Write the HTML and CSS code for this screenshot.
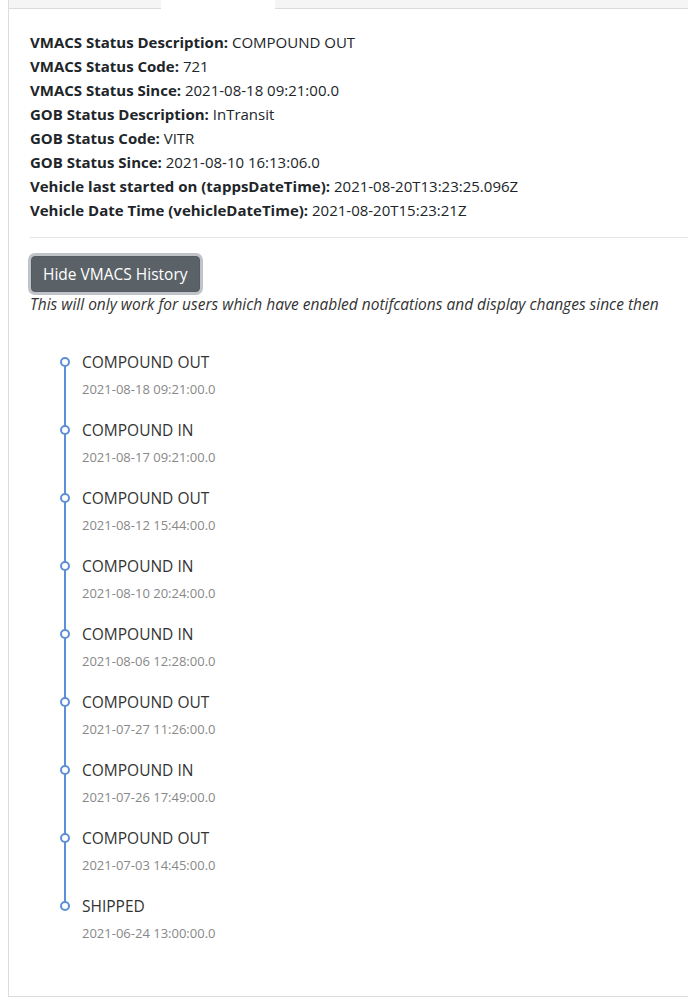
FILE: index.html
```html
<!DOCTYPE html>
<html lang="en">

<head>
    <meta charset="UTF-8" />
    <title>Vehicle Status</title>
    <link rel="stylesheet" href="styles.css">
</head>

<body>
    <div class="panel">
        <div class="tabs">
            <span class="tab first"></span>
            <span class="tab active"></span>
            <span class="tab rest"></span>
        </div>

        <div class="content">
            <div class="details">
                <div><strong>VMACS Status Description:</strong> COMPOUND OUT</div>
                <div><strong>VMACS Status Code:</strong> 721</div>
                <div><strong>VMACS Status Since:</strong> 2021-08-18 09:21:00.0</div>
                <div><strong>GOB Status Description:</strong> InTransit</div>
                <div><strong>GOB Status Code:</strong> VITR</div>
                <div><strong>GOB Status Since:</strong> 2021-08-10 16:13:06.0</div>
                <div><strong>Vehicle last started on (tappsDateTime):</strong> 2021-08-20T13:23:25.096Z</div>
                <div><strong>Vehicle Date Time (vehicleDateTime):</strong> 2021-08-20T15:23:21Z</div>
            </div>

            <hr>

            <button type="button" class="btn-history">Hide VMACS History</button>
            <p class="note">This will only work for users which have enabled notifcations and display changes since then</p>

            <ul class="timeline">
                <li><div class="status">COMPOUND OUT</div><div class="date">2021-08-18 09:21:00.0</div></li>
                <li><div class="status">COMPOUND IN</div><div class="date">2021-08-17 09:21:00.0</div></li>
                <li><div class="status">COMPOUND OUT</div><div class="date">2021-08-12 15:44:00.0</div></li>
                <li><div class="status">COMPOUND IN</div><div class="date">2021-08-10 20:24:00.0</div></li>
                <li><div class="status">COMPOUND IN</div><div class="date">2021-08-06 12:28:00.0</div></li>
                <li><div class="status">COMPOUND OUT</div><div class="date">2021-07-27 11:26:00.0</div></li>
                <li><div class="status">COMPOUND IN</div><div class="date">2021-07-26 17:49:00.0</div></li>
                <li><div class="status">COMPOUND OUT</div><div class="date">2021-07-03 14:45:00.0</div></li>
                <li><div class="status">SHIPPED</div><div class="date">2021-06-24 13:00:00.0</div></li>
            </ul>
        </div>
    </div>
</body>

</html>
```

FILE: styles.css
```css
body {
    margin: 0;
    font-family: "Open Sans", Arial, sans-serif;
    font-size: 15px;
    color: #212529;
    background: #fff;
}

.panel {
    margin-left: 8px;
    border-left: 1px solid #dcdcdc;
    border-bottom: 1px solid #dcdcdc;
    padding-bottom: 25px;
}

.tabs {
    display: flex;
    height: 9px;
}

.tab {
    display: block;
    box-sizing: border-box;
}

.tab.first {
    width: 152px;
    background: #f5f5f5;
    border-bottom: 1px solid #dcdcdc;
}

.tab.active {
    width: 114px;
    background: #fff;
}

.tab.rest {
    flex: 1;
    background: #f5f5f5;
    border-bottom: 1px solid #dcdcdc;
}

.content {
    padding: 21px 0 0 21px;
}

.details {
    line-height: 24px;
}

.details strong {
    font-weight: 700;
}

hr {
    border: none;
    border-top: 1px solid #e5e5e5;
    margin: 15px 0 0 0;
}

.btn-history {
    margin-top: 18px;
    margin-left: 1px;
    padding: 6px 11px;
    font-family: inherit;
    font-size: 15.5px;
    line-height: 22px;
    color: #fff;
    background-color: #5a6268;
    border: 1px solid #545b62;
    border-radius: 4px;
    box-shadow: 0 0 0 3px rgba(130, 138, 145, 0.5);
    cursor: pointer;
}

.note {
    margin: 0;
    font-style: italic;
    font-size: 15.5px;
    line-height: 24px;
    color: #333;
}

.timeline {
    list-style: none;
    margin: 43px 0 0 0;
    padding: 0 0 0 52px;
}

.timeline li {
    position: relative;
    height: 68px;
}

.timeline li::before {
    content: "";
    position: absolute;
    left: -22px;
    top: -2px;
    width: 6px;
    height: 6px;
    border: 2px solid #5b8fd6;
    border-radius: 50%;
    background: #fff;
    z-index: 1;
}

.timeline li::after {
    content: "";
    position: absolute;
    left: -18px;
    top: 4px;
    width: 2px;
    height: 68px;
    background: #5b8fd6;
}

.timeline li:last-child::after {
    display: none;
}

.status {
    position: relative;
    top: -7px;
    font-size: 15.5px;
    line-height: 20px;
    color: #333;
}

.date {
    position: relative;
    top: -6px;
    margin-top: 7px;
    font-size: 13px;
    line-height: 18px;
    color: #888;
}
```
